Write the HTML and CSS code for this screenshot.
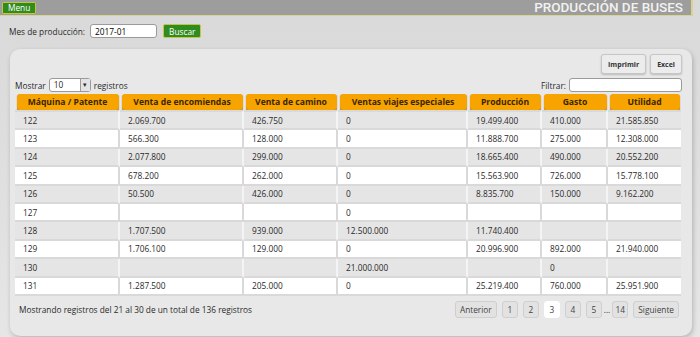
FILE: index.html
```html
<!DOCTYPE html>
<html lang="es">
<head>
  <meta charset="UTF-8">
  <title>Producción de buses</title>
  <link rel="stylesheet" href="styles.css">
</head>
<body>

<div class="topbar">
  <button class="btn-green menu">Menu</button>
  <div class="title">PRODUCCIÓN DE BUSES</div>
</div>

<div class="search">
  <label>Mes de producción:</label>
  <input class="month" type="text" value="2017-01">
  <button class="btn-green">Buscar</button>
</div>

<div class="panel">
  <div class="tools">
    <button class="btn-tool">Imprimir</button>
    <button class="btn-tool">Excel</button>
  </div>

  <div class="controls">
    <div class="length">
      Mostrar
      <span class="select"><span class="select-val">10</span><span class="select-arrow">&#9662;</span></span>
      registros
    </div>
    <div class="filter">
      Filtrar: <input class="filter-input" type="text">
    </div>
  </div>

  <table class="grid">
    <colgroup>
      <col style="width:105px"><col style="width:124px"><col style="width:94px"><col style="width:130px"><col style="width:74px"><col style="width:66px"><col style="width:73px">
    </colgroup>
    <thead>
      <tr>
        <th><div class="tab">Máquina / Patente</div></th>
        <th><div class="tab">Venta de encomiendas</div></th>
        <th><div class="tab">Venta de camino</div></th>
        <th><div class="tab">Ventas viajes especiales</div></th>
        <th><div class="tab">Producción</div></th>
        <th><div class="tab">Gasto</div></th>
        <th><div class="tab">Utilidad</div></th>
      </tr>
    </thead>
    <tbody>
      <tr class="odd"><td>122</td><td>2.069.700</td><td>426.750</td><td>0</td><td>19.499.400</td><td>410.000</td><td>21.585.850</td></tr>
      <tr class="even"><td>123</td><td>566.300</td><td>128.000</td><td>0</td><td>11.888.700</td><td>275.000</td><td>12.308.000</td></tr>
      <tr class="odd"><td>124</td><td>2.077.800</td><td>299.000</td><td>0</td><td>18.665.400</td><td>490.000</td><td>20.552.200</td></tr>
      <tr class="even"><td>125</td><td>678.200</td><td>262.000</td><td>0</td><td>15.563.900</td><td>726.000</td><td>15.778.100</td></tr>
      <tr class="odd"><td>126</td><td>50.500</td><td>426.000</td><td>0</td><td>8.835.700</td><td>150.000</td><td>9.162.200</td></tr>
      <tr class="even"><td>127</td><td></td><td></td><td>0</td><td></td><td></td><td></td></tr>
      <tr class="odd"><td>128</td><td>1.707.500</td><td>939.000</td><td>12.500.000</td><td>11.740.400</td><td></td><td></td></tr>
      <tr class="even"><td>129</td><td>1.706.100</td><td>129.000</td><td>0</td><td>20.996.900</td><td>892.000</td><td>21.940.000</td></tr>
      <tr class="odd"><td>130</td><td></td><td></td><td>21.000.000</td><td></td><td>0</td><td></td></tr>
      <tr class="even"><td>131</td><td>1.287.500</td><td>205.000</td><td>0</td><td>25.219.400</td><td>760.000</td><td>25.951.900</td></tr>
    </tbody>
  </table>

  <div class="footer">
    <div class="info">Mostrando registros del 21 al 30 de un total de 136 registros</div>
    <div class="pager">
      <span class="page">Anterior</span>
      <span class="page">1</span>
      <span class="page">2</span>
      <span class="page current">3</span>
      <span class="page">4</span>
      <span class="page">5</span>
      <span class="dots">...</span>
      <span class="page">14</span>
      <span class="page">Siguiente</span>
    </div>
  </div>
</div>

</body>
</html>
```

FILE: styles.css
```css
body, html {
  margin: 0;
  padding: 0;
  height: 100%;
  overflow: hidden;
}

body {
  background: linear-gradient(#d9d9d9, #e0e0e0 60%, #e6e6e6);
  font-family: "Open Sans", Arial, sans-serif;
  font-size: 8.3px;
  color: #2a2a2a;
}

.topbar {
  display: flex;
  justify-content: space-between;
  align-items: flex-start;
  height: 15px;
  margin-right: 7px;
  background: #9d9d9d;
  border-bottom: 1px solid #d8d48c;
  border-right: 2px solid #d8d48c;
}

.btn-green {
  background: #2f8c1f;
  color: #fff;
  border: 1px solid #c9c24a;
  border-radius: 2px;
  font-family: "Open Sans", Arial, sans-serif;
  font-size: 8.3px;
  padding: 0 5px;
  height: 14px;
  cursor: pointer;
}

.menu {
  margin: 2px 0 0 2px;
  height: 12px;
  line-height: 10px;
  padding: 0 5px;
  border-radius: 1px;
}

.title {
  font-family: Roboto, Arial, sans-serif;
  font-weight: 500;
  font-size: 13.5px;
  line-height: 15px;
  color: #f2f2f2;
  padding-right: 8px;
}

.search {
  display: flex;
  align-items: center;
  gap: 5px;
  padding: 8px 9px 0 9px;
  height: 14px;
}

.month {
  width: 57px;
  height: 10px;
  padding: 1px 4px;
  border: 1px solid #9a9a9a;
  border-radius: 3px;
  font-family: "Open Sans", Arial, sans-serif;
  font-size: 8.3px;
  margin-right: 1px;
}

.panel {
  margin: 11px 8px 0 10px;
  height: 282px;
  padding: 5px 10px 0 5px;
  background: #e8e8e8;
  border-radius: 10px;
  box-shadow: 1px 2px 5px rgba(0, 0, 0, 0.22);
}

.tools {
  display: flex;
  justify-content: flex-end;
  gap: 4px;
  height: 20px;
}

.btn-tool {
  background: #ececec;
  border: 1px solid #c6c6c6;
  border-radius: 3px;
  box-shadow: 0 1px 2px rgba(0, 0, 0, 0.2);
  font-family: "Open Sans", Arial, sans-serif;
  font-weight: 700;
  font-size: 7px;
  color: #333;
  padding: 0 6px;
  height: 20px;
}

.controls {
  display: flex;
  justify-content: space-between;
  align-items: flex-end;
  height: 16px;
  margin-top: 4px;
}

.length {
  display: flex;
  align-items: center;
  gap: 3px;
  padding-bottom: 2px;
}

.select {
  display: inline-flex;
  align-items: stretch;
  width: 42px;
  height: 14px;
  background: #fff;
  border: 1px solid #9a9a9a;
  border-radius: 3px;
  box-sizing: border-box;
}

.select-val {
  flex: 1;
  padding-left: 4px;
  line-height: 12px;
}

.select-arrow {
  width: 9px;
  border-left: 1px solid #9a9a9a;
  background: #e4e4e4;
  font-size: 7px;
  line-height: 12px;
  text-align: center;
}

.filter {
  display: flex;
  align-items: center;
  gap: 3px;
  padding-bottom: 2px;
}

.filter-input {
  width: 105px;
  height: 10px;
  padding: 1px 3px;
  border: 1px solid #9a9a9a;
  border-radius: 3px;
}

.grid {
  width: 666px;
  table-layout: fixed;
  border-collapse: separate;
  border-spacing: 0;
  margin-top: 0;
}

.grid th {
  padding: 0 1.5px 0 1.5px;
}

.tab {
  height: 16px;
  line-height: 16px;
  background: #f7a300;
  border-radius: 3px;
  box-shadow: 0 1px 1px rgba(90, 55, 0, 0.7);
  font-weight: 700;
  font-size: 8.6px;
  color: #3b2600;
  text-align: center;
  white-space: nowrap;
}

.grid td {
  height: 16.4px;
  padding: 0 0 0 8px;
  border-bottom: 2px solid #d9d9d9;
  border-right: 2px solid #d9d9d9;
  white-space: nowrap;
}

.grid td:last-child {
  border-right: none;
}

.grid tr.odd td {
  background: #e5e5e5;
  border-right-color: #f4f4f4;
}

.grid tr.even td {
  background: #fff;
}

.grid tbody tr:first-child td {
  border-top: 2px solid #d9d9d9;
}

.footer {
  display: flex;
  justify-content: space-between;
  align-items: flex-start;
  padding: 5px 3px 0 4px;
}

.info {
  padding-top: 3px;
}

.pager {
  display: flex;
  align-items: center;
  gap: 5px;
}

.page {
  height: 15px;
  line-height: 15px;
  min-width: 12px;
  padding: 0 1px;
  text-align: center;
  border: 1px solid #cfcfcf;
  border-radius: 3px;
  background: #e2e2e2;
  color: #444;
  box-sizing: content-box;
}

.page:first-child, .page:last-child {
  padding: 0 4px;
}

.page.current {
  background: #fff;
  border-color: #fff;
}

.dots {
  margin: 0 -3px;
}
```
